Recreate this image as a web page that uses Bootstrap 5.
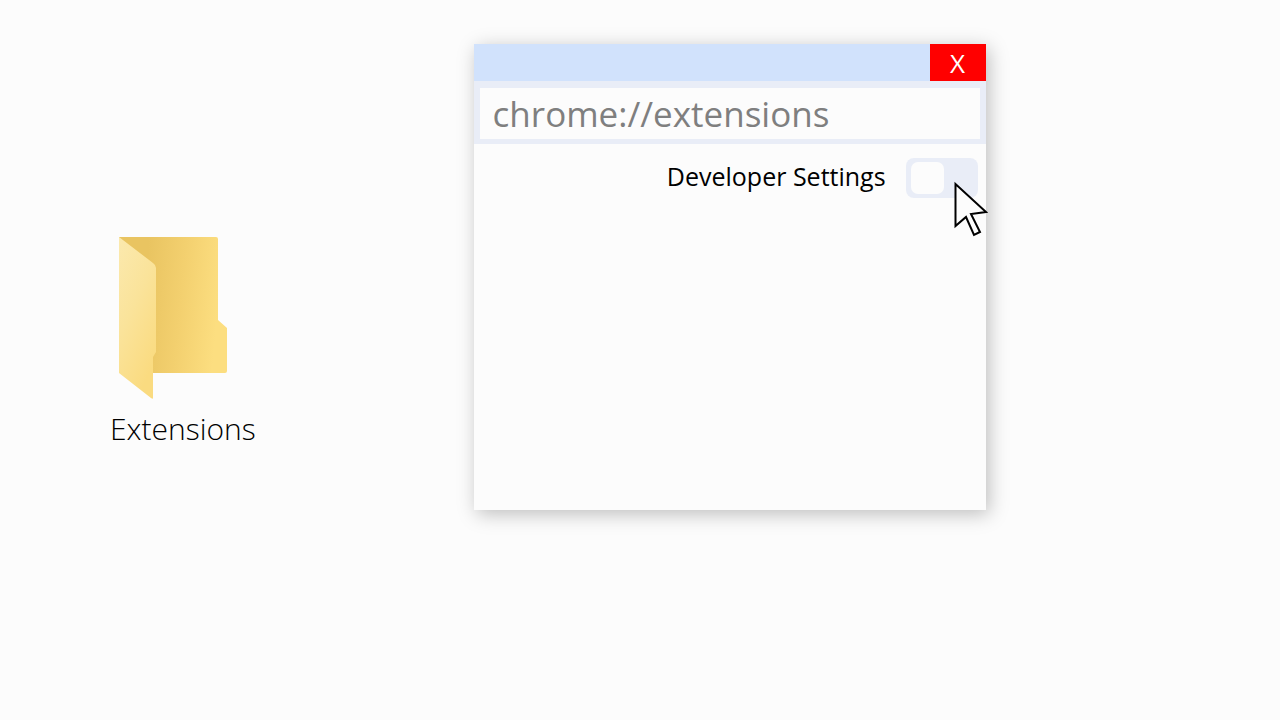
<!DOCTYPE html>
<html lang="en">
<head>
<meta charset="utf-8">
<meta name="viewport" content="width=device-width, initial-scale=1">
<title>Extensions</title>
<link href="https://cdn.jsdelivr.net/npm/bootstrap@5.3.0/dist/css/bootstrap.min.css" rel="stylesheet">
<style>
  body { background: #fcfcfc; color: #000; font-family: "Segoe UI", "Open Sans", "Noto Sans", sans-serif; }
  .desktop { display: grid; grid-template-columns: 37fr 40fr 23fr; align-items: start; min-height: 100vh; }
  .folder { margin: 236px 0 0 110px; color: #000; font-weight: 300; font-size: 30px; line-height: 40px; }
  .folder svg { display: block; margin: 0 0 8px 8px; }
  .window { margin-top: 44px; background: #fcfcfc; box-shadow: 3px 4px 18px rgba(0, 0, 0, .25); }
  .titlebar { background: #d1e2fc; height: 37px; }
  .close-btn { width: 56px; background: #f00; color: #fff; font-size: 26px; line-height: 36px; }
  .address { background: #e9edf7; padding: 7px 6px 5px; }
  .address input { height: 51px; background: #fcfcfc; color: #7f7f7f; font-size: 35px; line-height: 48px; padding: 0 13px; }
  .address input:focus { background: #fcfcfc; color: #7f7f7f; }
  .pane { min-height: 366px; padding: 14px 8px; }
  .setting { gap: 20px; font-size: 25px; line-height: 36px; }
  .toggle { width: 72px; height: 40px; background: #e9edf7; border-radius: 8px; appearance: none; margin: 0; position: relative; }
  .toggle::before { content: ""; position: absolute; left: 5px; top: 4px; width: 33px; height: 32px; border-radius: 7px; background: #fcfcfc; }
  .toggle:checked::before { left: 34px; }
  .switch-wrap { position: relative; height: 40px; }
  .pointer { position: absolute; left: 47px; top: 23px; pointer-events: none; }
</style>
</head>
<body>
<main class="desktop">
  <a href="#" class="folder d-inline-block text-decoration-none">
    <svg width="111" height="165" viewBox="0 0 111 165" aria-hidden="true">
      <defs>
        <linearGradient id="back" gradientUnits="userSpaceOnUse" x1="25" y1="65" x2="100" y2="72">
          <stop offset="0" stop-color="#e9c461"/><stop offset=".5" stop-color="#f3d06f"/><stop offset="1" stop-color="#fcde80"/>
        </linearGradient>
        <linearGradient id="front" x1="0" y1="0" x2=".5" y2="1">
          <stop offset="0" stop-color="#fbe9ae"/><stop offset=".5" stop-color="#fae39a"/><stop offset="1" stop-color="#fadb80"/>
        </linearGradient>
      </defs>
      <path fill="url(#back)" d="M1 1H98Q100 1 100 3V84L109 92V135Q109 137 107 137H34L1 60Z"/>
      <path fill="url(#front)" d="M1 1L35 27Q38 29 38 32V116L35 121V162Q35 163.500 33 162L1 137Z"/>
    </svg>
    <span>Extensions</span>
  </a>

  <section class="window" aria-label="Browser">
    <div class="titlebar d-flex justify-content-end">
      <button type="button" class="close-btn border-0 p-0" aria-label="Close">X</button>
    </div>
    <div class="address">
      <input type="text" class="form-control border-0 rounded-0" aria-label="Address" value="chrome://extensions">
    </div>
    <div class="pane">
      <div class="setting d-flex justify-content-end">
        <label for="dev">Developer Settings</label>
        <div class="switch-wrap">
          <input type="checkbox" role="switch" id="dev" class="toggle d-block">
          <svg class="pointer" width="36" height="56" viewBox="0 0 36 56" aria-hidden="true">
            <path fill="#fcfcfc" stroke="#000" stroke-width="2" d="M2.500 3V45L13 36L21 54L27 51L18 33L33 31Z"/>
          </svg>
        </div>
      </div>
    </div>
  </section>
</main>
<script src="https://cdn.jsdelivr.net/npm/bootstrap@5.3.0/dist/js/bootstrap.bundle.min.js"></script>
</body>
</html>
